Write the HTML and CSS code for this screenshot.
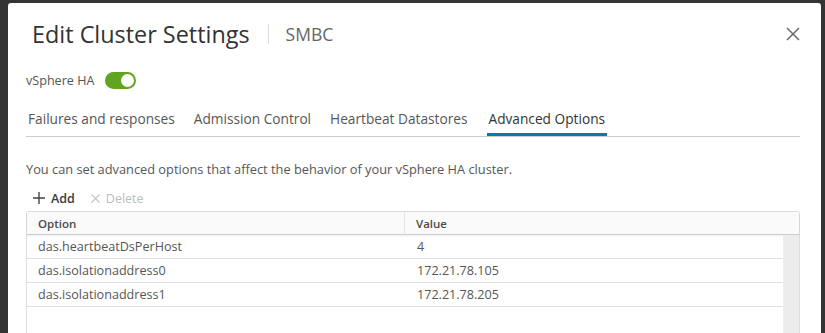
FILE: index.html
```html
<!DOCTYPE html>
<html lang="en">

<head>
    <meta charset="UTF-8">
    <title>Edit Cluster Settings</title>
    <link rel="stylesheet" href="styles.css">
</head>

<body>
    <div class="modal">
        <div class="header">
            <h2>Edit Cluster Settings</h2>
            <span class="sep"></span>
            <span class="sub">SMBC</span>
            <svg class="close" width="14" height="14" viewBox="0 0 14 14">
                <path d="M1 1 L13 13 M13 1 L1 13" stroke="#6a6a6a" stroke-width="1.5" fill="none"/>
            </svg>
        </div>

        <div class="ha">
            <span>vSphere HA</span>
            <span class="toggle"><span class="knob"></span></span>
        </div>

        <ul class="tabs">
            <li>Failures and responses</li>
            <li>Admission Control</li>
            <li>Heartbeat Datastores</li>
            <li class="active">Advanced Options</li>
        </ul>

        <p class="desc">You can set advanced options that affect the behavior of your vSphere HA cluster.</p>

        <div class="actions">
            <span class="btn">
                <svg width="12" height="12" viewBox="0 0 12 12"><path d="M6 0 V12 M0 6 H12" stroke="#444" stroke-width="1.4"/></svg>
                Add
            </span>
            <span class="btn off">
                <svg width="9" height="9" viewBox="0 0 9 9"><path d="M0.5 0.5 L8.5 8.5 M8.5 0.5 L0.5 8.5" stroke="#c4c4c4" stroke-width="1.1"/></svg>
                Delete
            </span>
        </div>

        <div class="grid">
            <div class="row head">
                <div class="cell">Option</div>
                <div class="cell">Value</div>
            </div>
            <div class="body">
                <div class="rows">
                    <div class="row">
                        <div class="cell">das.heartbeatDsPerHost</div>
                        <div class="cell">4</div>
                    </div>
                    <div class="row">
                        <div class="cell">das.isolationaddress0</div>
                        <div class="cell">172.21.78.105</div>
                    </div>
                    <div class="row">
                        <div class="cell">das.isolationaddress1</div>
                        <div class="cell">172.21.78.205</div>
                    </div>
                </div>
                <div class="scroll"></div>
            </div>
        </div>
    </div>
</body>

</html>
```

FILE: styles.css
```css
*{
    box-sizing: border-box;
}
html, body{
    margin: 0;
    height: 333px;
    overflow: hidden;
}
body{
    background: #343434;
    padding: 3px 4px 0 8px;
    font-family: "Open Sans", "Noto Sans", sans-serif;
    color: #565656;
}
.modal{
    background: #fff;
    border-radius: 3px 3px 0 0;
    height: 330px;
    overflow: hidden;
    padding: 0 21px 0 18px;
}
.header{
    display: flex;
    align-items: center;
    height: 62px;
    padding-left: 6px;
}
.header h2{
    margin: 0;
    font-weight: 400;
    font-size: 23.4px;
    color: #333;
}
.sep{
    width: 1px;
    height: 20px;
    background: #ddd;
    margin: 0 17px 0 18px;
}
.sub{
    font-size: 17.5px;
    color: #666;
}
.close{
    margin-left: auto;
}
.ha{
    display: flex;
    align-items: center;
    gap: 11px;
    font-size: 12.6px;
    height: 30px;
    color: #555;
}
.toggle{
    width: 31px;
    height: 17px;
    border-radius: 9px;
    background: #62a420;
    display: flex;
    justify-content: flex-end;
    padding: 2px;
}
.knob{
    width: 13px;
    height: 13px;
    border-radius: 50%;
    background: #fff;
}
.tabs{
    list-style: none;
    margin: 6px 0 0 0;
    padding: 0 0 0 2px;
    display: flex;
    gap: 19px;
    border-bottom: 1px solid #ccc;
    font-size: 13.7px;
}
.tabs li{
    padding: 8px 0 8px;
    color: #565656;
}
.tabs li.active{
    color: #333;
    box-shadow: inset 0 -3px 0 #0079b8;
    padding-left: 2px;
    padding-right: 2px;
}
.desc{
    margin: 23px 0 0;
    font-size: 12.8px;
    color: #565656;
}
.actions{
    display: flex;
    gap: 16px;
    margin: 8px 0 1px 7px;
    height: 24px;
    align-items: center;
    font-size: 12.5px;
}
.btn{
    display: flex;
    align-items: center;
    gap: 6px;
    color: #3a3a3a;
    font-weight: 600;
}
.btn.off{
    color: #bdbdbd;
    font-weight: 400;
}
.grid{
    border: 1px solid #ddd;
    border-bottom: none;
    border-radius: 3px 3px 0 0;
    height: 140px;
    display: flex;
    flex-direction: column;
    font-size: 12.6px;
}
.row{
    display: flex;
    height: 24px;
    align-items: center;
    border-bottom: 1px solid #e0e0e0;
}
.row.head{
    background: #fafafa;
    font-weight: 600;
    font-size: 11.5px;
    color: #4a4a4a;
    height: 23px;
    border-bottom: 1px solid #ccc;
    box-shadow: 0 1px 2px rgba(0, 0, 0, 0.08);
}
.cell{
    padding-left: 11px;
}
.cell:first-child{
    width: 378px;
    border-right: 1px solid #e4e4e4;
    height: 100%;
    display: flex;
    align-items: center;
}
.row:not(.head) .cell:first-child{
    border-right: none;
}
.row:not(.head) .cell:last-child{
    padding-left: 12px;
}
.body{
    flex: 1;
    display: flex;
}
.rows{
    flex: 1;
}
.scroll{
    width: 16px;
    background: #ececec;
}
```
